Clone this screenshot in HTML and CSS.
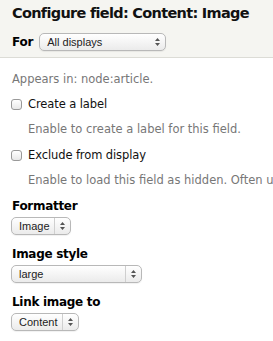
FILE: index.html
```html
<!DOCTYPE html>
<html>
<head>
<meta charset="utf-8">
<link rel="stylesheet" href="styles.css">
</head>
<body>
<header class="head">
  <h1 class="title">Configure field: Content: Image</h1>
  <div class="for-row">
    <span class="for-label">For</span>
    <div class="select select-for">
      <span class="select-text">All displays</span>
      <span class="select-arrows"><svg width="5" height="8" viewBox="0 0 5 8"><path d="M2.5 0 L5 3 L0 3 Z M2.5 8 L5 5 L0 5 Z" fill="#555"/></svg></span>
    </div>
  </div>
</header>
<main class="body">
  <p class="appears">Appears in: node:article.</p>
  <div class="check">
    <span class="box"></span><span class="check-label">Create a label</span>
  </div>
  <p class="desc">Enable to create a label for this field.</p>
  <div class="check">
    <span class="box"></span><span class="check-label">Exclude from display</span>
  </div>
  <p class="desc">Enable to load this field as hidden. Often used for fields that are not displayed.</p>
  <div class="field first">
    <div class="field-label">Formatter</div>
    <div class="select select-image">
      <span class="select-text">Image</span>
      <span class="select-arrows sep"><svg width="5" height="8" viewBox="0 0 5 8"><path d="M2.5 0 L5 3 L0 3 Z M2.5 8 L5 5 L0 5 Z" fill="#555"/></svg></span>
    </div>
  </div>
  <div class="field">
    <div class="field-label">Image style</div>
    <div class="select select-large">
      <span class="select-text">large</span>
      <span class="select-arrows sep"><svg width="5" height="8" viewBox="0 0 5 8"><path d="M2.5 0 L5 3 L0 3 Z M2.5 8 L5 5 L0 5 Z" fill="#555"/></svg></span>
    </div>
  </div>
  <div class="field">
    <div class="field-label">Link image to</div>
    <div class="select select-content">
      <span class="select-text">Content</span>
      <span class="select-arrows sep"><svg width="5" height="8" viewBox="0 0 5 8"><path d="M2.5 0 L5 3 L0 3 Z M2.5 8 L5 5 L0 5 Z" fill="#555"/></svg></span>
    </div>
  </div>
</main>
</body>
</html>
```
FILE: styles.css
```css
html, body {
  margin: 0;
  padding: 0;
  background: #fff;
  overflow: hidden;
}
body {
  font-family: "DejaVu Sans", Verdana, sans-serif;
  color: #000;
  width: 273px;
  height: 341px;
}
.head {
  background: #f5f5f1;
  border-bottom: 1px solid #dcdcd6;
  padding: 3px 0 6px 12px;
}
.title {
  margin: 0;
  font-size: 14.5px;
  letter-spacing: -0.7px;
  font-weight: bold;
  line-height: 20px;
  color: #111;
  white-space: nowrap;
}
.for-row {
  display: flex;
  align-items: center;
  gap: 6px;
  margin-top: 10px;
}
.for-label {
  font-weight: bold;
  font-size: 12px;
  letter-spacing: -0.2px;
}
.select {
  display: flex;
  align-items: stretch;
  box-sizing: border-box;
  height: 18px;
  border: 1px solid #b8b8b8;
  border-radius: 5px;
  background: linear-gradient(#ffffff, #ebebeb);
  box-shadow: 0 1px 1px rgba(0,0,0,0.06);
  font-family: "Liberation Sans", Arial, sans-serif;
  font-size: 11px;
  color: #222;
}
.select-text {
  flex: 1;
  padding-left: 7px;
  line-height: 16px;
}
.select-arrows {
  width: 15px;
  display: flex;
  align-items: center;
  justify-content: center;
}
.select-arrows.sep {
  border-left: 1px solid #cfcfcf;
}
.select-for { width: 127px; }
.select-image { width: 60px; }
.select-large { width: 131px; }
.select-content { width: 68px; }
.body {
  padding: 14px 0 0 11px;
}
.appears {
  margin: 0 0 11px 1px;
  font-size: 11.5px;
  line-height: 14px;
  color: #777;
}
.check {
  display: flex;
  align-items: center;
  font-size: 11.5px;
  letter-spacing: -0.1px;
  height: 14px;
}
.box {
  width: 9px;
  height: 9px;
  border: 1px solid #999;
  border-radius: 3px;
  background: linear-gradient(#fff, #e8e8e8);
  margin-right: 6px;
}
.check-label {
  color: #111;
}
.desc {
  margin: 11px 0 12px 17px;
  font-size: 11.5px;
  line-height: 14px;
  color: #777;
  white-space: nowrap;
}
.field {
  margin-top: 12px;
}
.field.first {
  margin-top: 8px;
}
.field-label {
  font-weight: bold;
  font-size: 12px;
  letter-spacing: -0.3px;
  line-height: 14px;
  margin-bottom: 4px;
  padding-left: 1px;
}
```
